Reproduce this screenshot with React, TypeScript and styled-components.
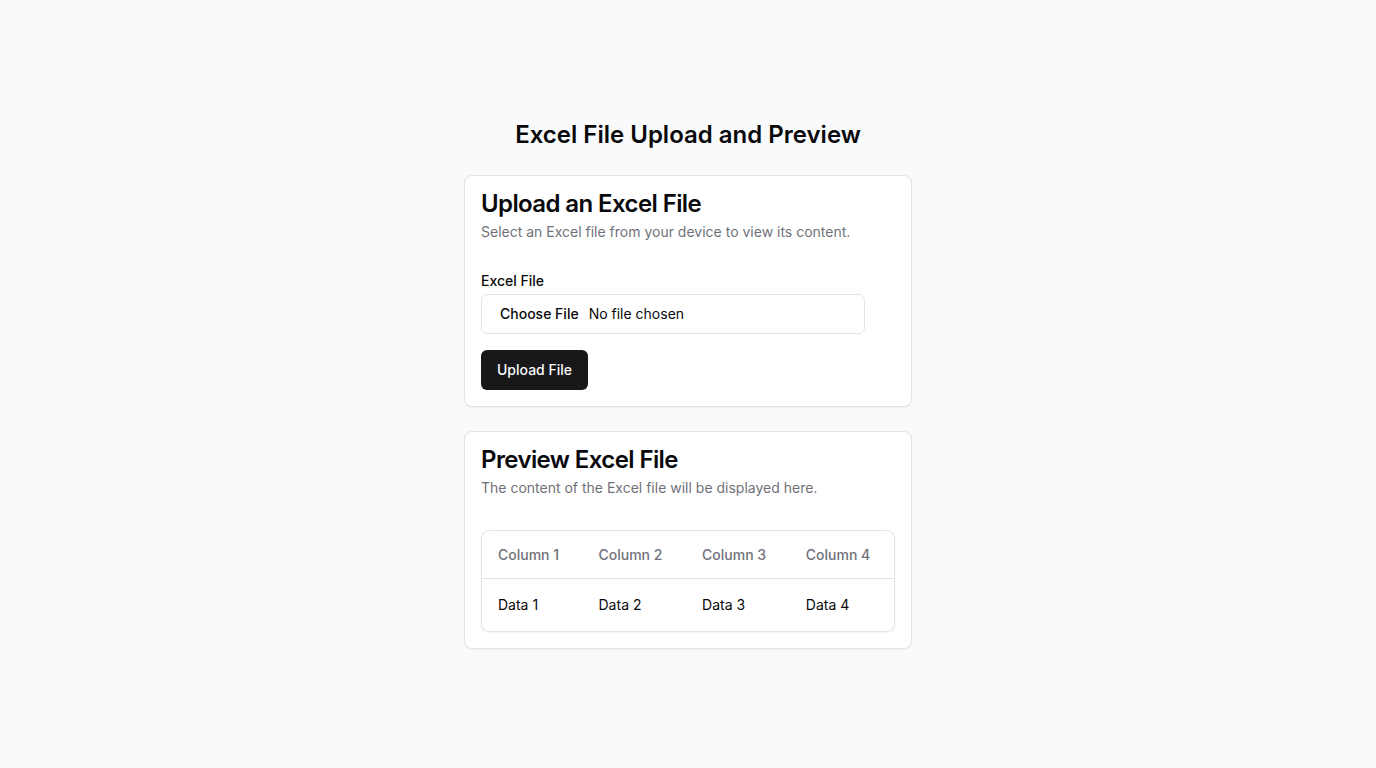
import React from "react";
import styled, { createGlobalStyle } from "styled-components";

const GlobalStyle = createGlobalStyle`
  *, *::before, *::after { box-sizing: border-box; }
  html, body { margin: 0; padding: 0; }
  body {
    background: #f9fafb;
    font-family: Inter, "Noto Sans", sans-serif;
    color: #09090b;
    -webkit-font-smoothing: antialiased;
  }
`;

const Page = styled.main`
  min-height: 100vh;
  display: flex;
  flex-direction: column;
  align-items: center;
  justify-content: center;
  padding: 16px;
`;

const PageTitle = styled.h1`
  margin: 0 0 24px;
  font-size: 24px;
  line-height: 32px;
  font-weight: 600;
  text-align: center;
`;

const Stack = styled.div`
  width: 100%;
  max-width: 448px;
  display: flex;
  flex-direction: column;
  gap: 24px;
`;

const Card = styled.section`
  background: #ffffff;
  border: 1px solid #e4e4e7;
  border-radius: 8px;
  box-shadow: 0 1px 2px rgba(0, 0, 0, 0.05);
`;

const CardHeader = styled.header`
  display: flex;
  flex-direction: column;
  gap: 6px;
  padding: 16px;
`;

const CardTitle = styled.h2`
  margin: 0;
  font-size: 24px;
  line-height: 1;
  font-weight: 600;
  letter-spacing: -0.6px;
`;

const CardDescription = styled.p`
  margin: 0;
  font-size: 14px;
  line-height: 20px;
  color: #71717a;
`;

const CardContent = styled.div`
  padding: 16px;
`;

const Form = styled.form`
  display: flex;
  flex-direction: column;
  gap: 16px;
`;

const Field = styled.div`
  display: grid;
  gap: 6px;
  max-width: 384px;
`;

const Label = styled.label`
  font-size: 14px;
  line-height: 1;
  font-weight: 500;
`;

const FileInput = styled.input`
  display: flex;
  height: 40px;
  width: 100%;
  border: 1px solid #e4e4e7;
  border-radius: 6px;
  background: #ffffff;
  padding: 8px 12px;
  font-family: Inter, "Noto Sans", sans-serif;
  font-size: 14px;
  line-height: 22px;
  color: #09090b;

  &::file-selector-button {
    border: 0;
    background: transparent;
    font-family: Inter, "Noto Sans", sans-serif;
    font-size: 14px;
    font-weight: 500;
    color: #09090b;
  }
`;

const Button = styled.button`
  align-self: flex-start;
  height: 40px;
  padding: 0 16px;
  border: 0;
  border-radius: 6px;
  background: #18181b;
  color: #fafafa;
  font-family: Inter, "Noto Sans", sans-serif;
  font-size: 14px;
  font-weight: 500;
  cursor: pointer;
`;

const TableWrap = styled.div`
  border: 1px solid #e4e4e7;
  border-radius: 8px;
  overflow: hidden;
  box-shadow: 0 1px 2px rgba(0, 0, 0, 0.05);
`;

const Table = styled.table`
  width: 100%;
  border-collapse: collapse;
  font-size: 14px;
  line-height: 20px;
`;

const HeadRow = styled.tr`
  border-bottom: 1px solid #e4e4e7;
`;

const Th = styled.th`
  height: 48px;
  padding: 0 16px;
  text-align: left;
  vertical-align: middle;
  font-weight: 500;
  color: #71717a;
`;

const Td = styled.td`
  padding: 16px;
  vertical-align: middle;
  color: #09090b;
`;

const columns = ["Column 1", "Column 2", "Column 3", "Column 4"];
const rows = [["Data 1", "Data 2", "Data 3", "Data 4"]];

export default function App() {
  return (
    <>
      <GlobalStyle />
      <Page>
        <PageTitle>Excel File Upload and Preview</PageTitle>
        <Stack>
          <Card>
            <CardHeader>
              <CardTitle>Upload an Excel File</CardTitle>
              <CardDescription>
                Select an Excel file from your device to view its content.
              </CardDescription>
            </CardHeader>
            <CardContent>
              <Form onSubmit={(e) => e.preventDefault()}>
                <Field>
                  <Label htmlFor="excel-file">Excel File</Label>
                  <FileInput id="excel-file" type="file" accept=".xlsx,.xls" />
                </Field>
                <Button type="submit">Upload File</Button>
              </Form>
            </CardContent>
          </Card>
          <Card>
            <CardHeader>
              <CardTitle>Preview Excel File</CardTitle>
              <CardDescription>
                The content of the Excel file will be displayed here.
              </CardDescription>
            </CardHeader>
            <CardContent>
              <TableWrap>
                <Table>
                  <thead>
                    <HeadRow>
                      {columns.map((c) => (
                        <Th key={c}>{c}</Th>
                      ))}
                    </HeadRow>
                  </thead>
                  <tbody>
                    {rows.map((r, i) => (
                      <tr key={i}>
                        {r.map((d) => (
                          <Td key={d}>{d}</Td>
                        ))}
                      </tr>
                    ))}
                  </tbody>
                </Table>
              </TableWrap>
            </CardContent>
          </Card>
        </Stack>
      </Page>
    </>
  );
}
